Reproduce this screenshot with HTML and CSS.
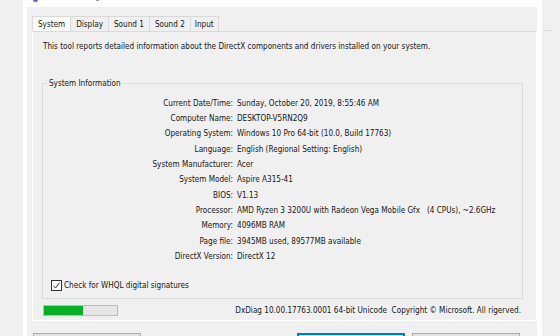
FILE: index.html
```html
<!DOCTYPE html>
<html lang="en">
<head>
    <meta charset="UTF-8">
    <title>DirectX Diagnostic Tool</title>
    <link rel="stylesheet" href="styles.css">
</head>
<body>
<div class="screen">
    <div class="side"></div>

    <div class="window">
        <div class="titlebar">
            <span class="app-icon"></span>
            <span class="title-bit"></span>
        </div>

        <div class="body">
            <div class="tabs">
                <div class="tab active">System</div>
                <div class="tab">Display</div>
                <div class="tab">Sound 1</div>
                <div class="tab">Sound 2</div>
                <div class="tab">Input</div>
            </div>

            <div class="page">
                <p class="intro">This tool reports detailed information about the DirectX components and drivers installed on your system.</p>

                <fieldset class="group">
                    <legend>System Information</legend>
                    <div class="info">
                        <span class="key">Current Date/Time:</span><span>Sunday, October 20, 2019, 8:55:46 AM</span>
                        <span class="key">Computer Name:</span><span>DESKTOP-V5RN2Q9</span>
                        <span class="key">Operating System:</span><span>Windows 10 Pro 64-bit (10.0, Build 17763)</span>
                        <span class="key">Language:</span><span>English (Regional Setting: English)</span>
                        <span class="key">System Manufacturer:</span><span>Acer</span>
                        <span class="key">System Model:</span><span>Aspire A315-41</span>
                        <span class="key">BIOS:</span><span>V1.13</span>
                        <span class="key">Processor:</span><span>AMD Ryzen 3 3200U with Radeon Vega Mobile Gfx   (4 CPUs), ~2.6GHz</span>
                        <span class="key">Memory:</span><span>4096MB RAM</span>
                        <span class="key">Page file:</span><span>3945MB used, 89577MB available</span>
                        <span class="key">DirectX Version:</span><span>DirectX 12</span>
                    </div>
                    <label class="check">
                        <span class="box">
                            <svg width="9" height="9" viewBox="0 0 9 9"><path d="M1.5 4.8 L3.6 7 L7.6 1.6" fill="none" stroke="#333" stroke-width="1"/></svg>
                        </span>
                        Check for WHQL digital signatures
                    </label>
                </fieldset>

                <div class="status">
                    <div class="progress"><div class="fill" style="width: 53%"></div></div>
                    <span class="version">DxDiag 10.00.17763.0001 64-bit Unicode  Copyright © Microsoft. All rigerved.</span>
                </div>
            </div>

            <!-- button captions sit below the visible area -->
            <div class="buttons">
                <button class="btn" aria-label="Help"></button>
                <button class="btn default" aria-label="Next Page"></button>
                <button class="btn" aria-label="Save All Information"></button>
            </div>
        </div>
    </div>

    <div class="side right"><span class="edge-line"></span></div>
</div>
</body>
</html>
```

FILE: styles.css
```css
body {
    margin: 0;
    background: #f0f0f0;
    font-family: "DejaVu Sans Condensed", "Liberation Sans", sans-serif;
    font-size: 8.1px;
    color: #161616;
}
.screen {
    display: flex;
    height: 336px;
    overflow: hidden;
}
.side {
    width: 23px;
    background: #f0f0f0;
    border-right: 4px solid #fff;
}
.side.right {
    width: 18px;
    border-right: none;
    border-left: 5px solid #fff;
    padding-top: 30px;
}
.edge-line {
    display: block;
    width: 9px;
    height: 1px;
    margin-left: 1px;
    background: #dcdcdc;
}
.window {
    width: 510px;
    display: flex;
    flex-direction: column;
}
.titlebar {
    flex-shrink: 0;
    height: 7px;
    background: #fff;
    position: relative;
}
.app-icon {
    position: absolute;
    left: 6px;
    top: 0;
    width: 5px;
    height: 2px;
    background: #6a62d8;
    border-radius: 0 0 2px 2px;
}
.title-bit {
    position: absolute;
    left: 69px;
    top: 0;
    width: 3px;
    height: 1px;
    background: #9a9aa8;
}
.body {
    flex: 1;
    background: #f0f0f0;
    padding: 9px 0 0 5px;
}

/* tabs */
.tabs {
    display: flex;
    height: 15px;
    padding-left: 1px;
}
.tab {
    padding: 0 5px;
    line-height: 14px;
    border: 1px solid #d9d9d9;
    border-bottom: none;
    margin-left: -1px;
    background: #f0f0f0;
}
.tab:last-child { padding: 0 4px; }
.tab.active {
    background: #fff;
    position: relative;
    z-index: 1;
}

/* tab page */
.page {
    box-sizing: border-box;
    height: 290px;
    border: 1px solid #fff;
    border-top-color: #dadada;
    padding-top: 9px;
}
.intro {
    margin: 0 0 26px 10px;
    line-height: 11px;
}
.group {
    margin: 0 13px 0 9px;
    padding: 6px 0 6px 0;
    border: 1px solid #dcdcdc;
    min-width: 0;
}
.group legend {
    margin-left: 4px;
    padding: 0 2px;
    line-height: 11px;
}
.info {
    display: grid;
    grid-template-columns: 190px 1fr;
    grid-auto-rows: 15.33px;
    column-gap: 4px;
    align-items: center;
    white-space: pre;
}
.key { text-align: right; }
.check {
    display: flex;
    align-items: center;
    gap: 2px;
    height: 13px;
    margin: 15px 0 0 8px;
}
.box {
    box-sizing: border-box;
    width: 11px;
    height: 11px;
    border: 1px solid #333;
    background: #fff;
    display: flex;
    align-items: center;
    justify-content: center;
}
.status {
    display: flex;
    justify-content: space-between;
    align-items: center;
    margin-top: 6px;
    padding: 0 15px 0 10px;
}
.progress {
    box-sizing: border-box;
    width: 75px;
    height: 11px;
    border: 1px solid #bcbcbc;
    background: #e6e6e6;
}
.fill {
    height: 100%;
    background: #06b025;
}
.version { white-space: pre; }

/* bottom buttons */
.buttons {
    display: flex;
    gap: 7px;
    margin-top: 12px;
    padding: 0 17px 0 1px;
}
.btn {
    width: 108px;
    height: 23px;
    border: 1px solid #adadad;
    background: #e1e1e1;
    font: inherit;
    color: #111;
}
.btn.default {
    margin-left: auto;
    border: 2px solid #0078d7;
}
```
